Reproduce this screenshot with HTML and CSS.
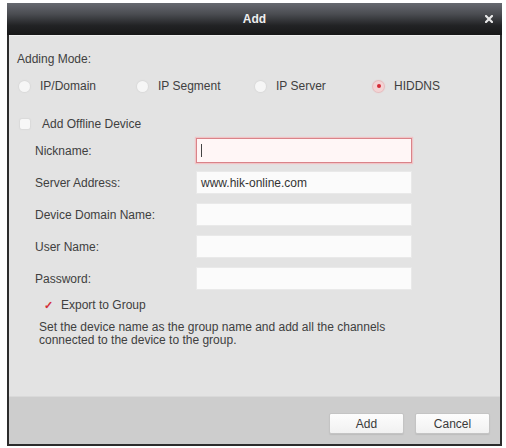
FILE: index.html
```html
<!DOCTYPE html>
<html>
<head>
<meta charset="utf-8">
<link rel="stylesheet" href="styles.css">
</head>
<body>
<div class="dialog">
  <div class="titlebar">
    <span></span>
    <span class="title">Add</span>
    <span class="close"><svg width="8" height="8" viewBox="0 0 8 8"><path d="M1 1L7 7M7 1L1 7" stroke="#e8e8e8" stroke-width="2.2" stroke-linecap="square"/></svg></span>
  </div>
  <div class="body">
    <div class="section-label">Adding Mode:</div>
    <div class="modes">
      <label class="radio"><span class="dot"></span>IP/Domain</label>
      <label class="radio"><span class="dot"></span>IP Segment</label>
      <label class="radio"><span class="dot"></span>IP Server</label>
      <label class="radio on"><span class="dot"></span>HIDDNS</label>
    </div>
    <label class="check offline"><span class="box"></span>Add Offline Device</label>
    <div class="form">
      <div class="row"><span class="lbl">Nickname:</span><div class="input focus"><span class="caret"></span></div></div>
      <div class="row"><span class="lbl">Server Address:</span><div class="input">www.hik-online.com</div></div>
      <div class="row"><span class="lbl">Device Domain Name:</span><div class="input"></div></div>
      <div class="row"><span class="lbl">User Name:</span><div class="input"></div></div>
      <div class="row"><span class="lbl">Password:</span><div class="input"></div></div>
    </div>
    <label class="check export"><span class="tick">✓</span>Export to Group</label>
    <p class="desc">Set the device name as the group name and add all the channels<br>connected to the device to the group.</p>
  </div>
  <div class="footer">
    <button class="btn">Add</button>
    <button class="btn">Cancel</button>
  </div>
</div>
</body>
</html>
```

FILE: styles.css
```css
html, body {
  margin: 0;
  background: #ffffff;
}
body {
  padding: 3px 0 0 7px;
  font-family: "Liberation Sans", Arial, sans-serif;
  font-size: 12px;
  color: #404040;
}
.dialog {
  width: 495px;
  box-sizing: border-box;
  border: 2px solid #2c2c2c;
  border-top: none;
  background: #e3e3e3;
}
.titlebar {
  height: 32px;
  margin: 0 -2px;
  display: grid;
  grid-template-columns: 1fr auto 1fr;
  align-items: center;
  background: linear-gradient(#666970 0%, #4a4c51 35%, #222325 70%, #171718 100%);
}
.title {
  color: #eeeeee;
  font-weight: bold;
  font-size: 12px;
}
.close {
  justify-self: end;
  padding-right: 9px;
  display: flex;
}
.body {
  height: 361px;
  box-sizing: border-box;
  padding: 16px 8px 0 8px;
  border-top: 1px solid #f0f0f0;
}
.section-label {
  line-height: 14px;
}
.modes {
  margin-top: 13px;
  margin-left: 2px;
  display: grid;
  grid-template-columns: repeat(4, 118px);
  line-height: 14px;
}
.radio {
  display: flex;
  align-items: center;
}
.dot {
  width: 11px;
  height: 11px;
  border-radius: 50%;
  background: #f6f6f6;
  box-shadow: 0 0 1px 1px #dadada;
  margin-right: 10px;
  display: flex;
  align-items: center;
  justify-content: center;
}
.radio.on .dot {
  background: #f3d3d4;
  box-shadow: 0 0 1px 1px #e6b8ba;
}
.radio.on .dot::after {
  content: "";
  width: 4px;
  height: 4px;
  border-radius: 50%;
  background: #d42a35;
}
.check {
  display: flex;
  align-items: center;
  line-height: 14px;
}
.offline {
  margin: 24px 0 0 3px;
}
.box {
  width: 10px;
  height: 10px;
  border-radius: 2px;
  background: #f7f7f7;
  box-shadow: 0 0 1px 1px #dadada;
  margin-right: 12px;
}
.form {
  margin: 8px 0 0 18px;
  display: flex;
  flex-direction: column;
  gap: 9px;
}
.row {
  display: flex;
  align-items: center;
  height: 23px;
}
.lbl {
  width: 161px;
}
.input {
  width: 216px;
  height: 23px;
  box-sizing: border-box;
  background: #fbfbfb;
  border: 1px solid #e9e9e9;
  padding-left: 4px;
  display: flex;
  align-items: center;
  color: #333;
}
.input.focus {
  height: 25px;
  margin-top: -1px;
  border: 1px solid #d98389;
  box-shadow: 0 0 1px 1px #f1c4c6;
  background: #fff6f6;
}
.caret {
  width: 1px;
  height: 13px;
  background: #444;
}
.export {
  margin: 8px 0 0 27px;
}
.tick {
  color: #d4303a;
  font-size: 11px;
  font-weight: bold;
  margin-right: 8px;
}
.desc {
  margin: 9px 0 0 22px;
  line-height: 13px;
}
.footer {
  height: 48px;
  box-sizing: border-box;
  background: #cdcdcd;
  border-top: 1px solid #d9d9d9;
  display: flex;
  justify-content: flex-end;
  align-items: flex-start;
  gap: 11px;
  padding: 16px 10px 0 0;
}
.btn {
  width: 75px;
  height: 21px;
  font-family: "Liberation Sans", Arial, sans-serif;
  font-size: 12px;
  color: #3a3a3a;
  background: linear-gradient(#fdfdfd, #f1f1f1);
  border: 1px solid #c4c4c4;
  border-radius: 2px;
  box-shadow: 0 1px 1px #bdbdbd;
  padding: 0;
}
```
